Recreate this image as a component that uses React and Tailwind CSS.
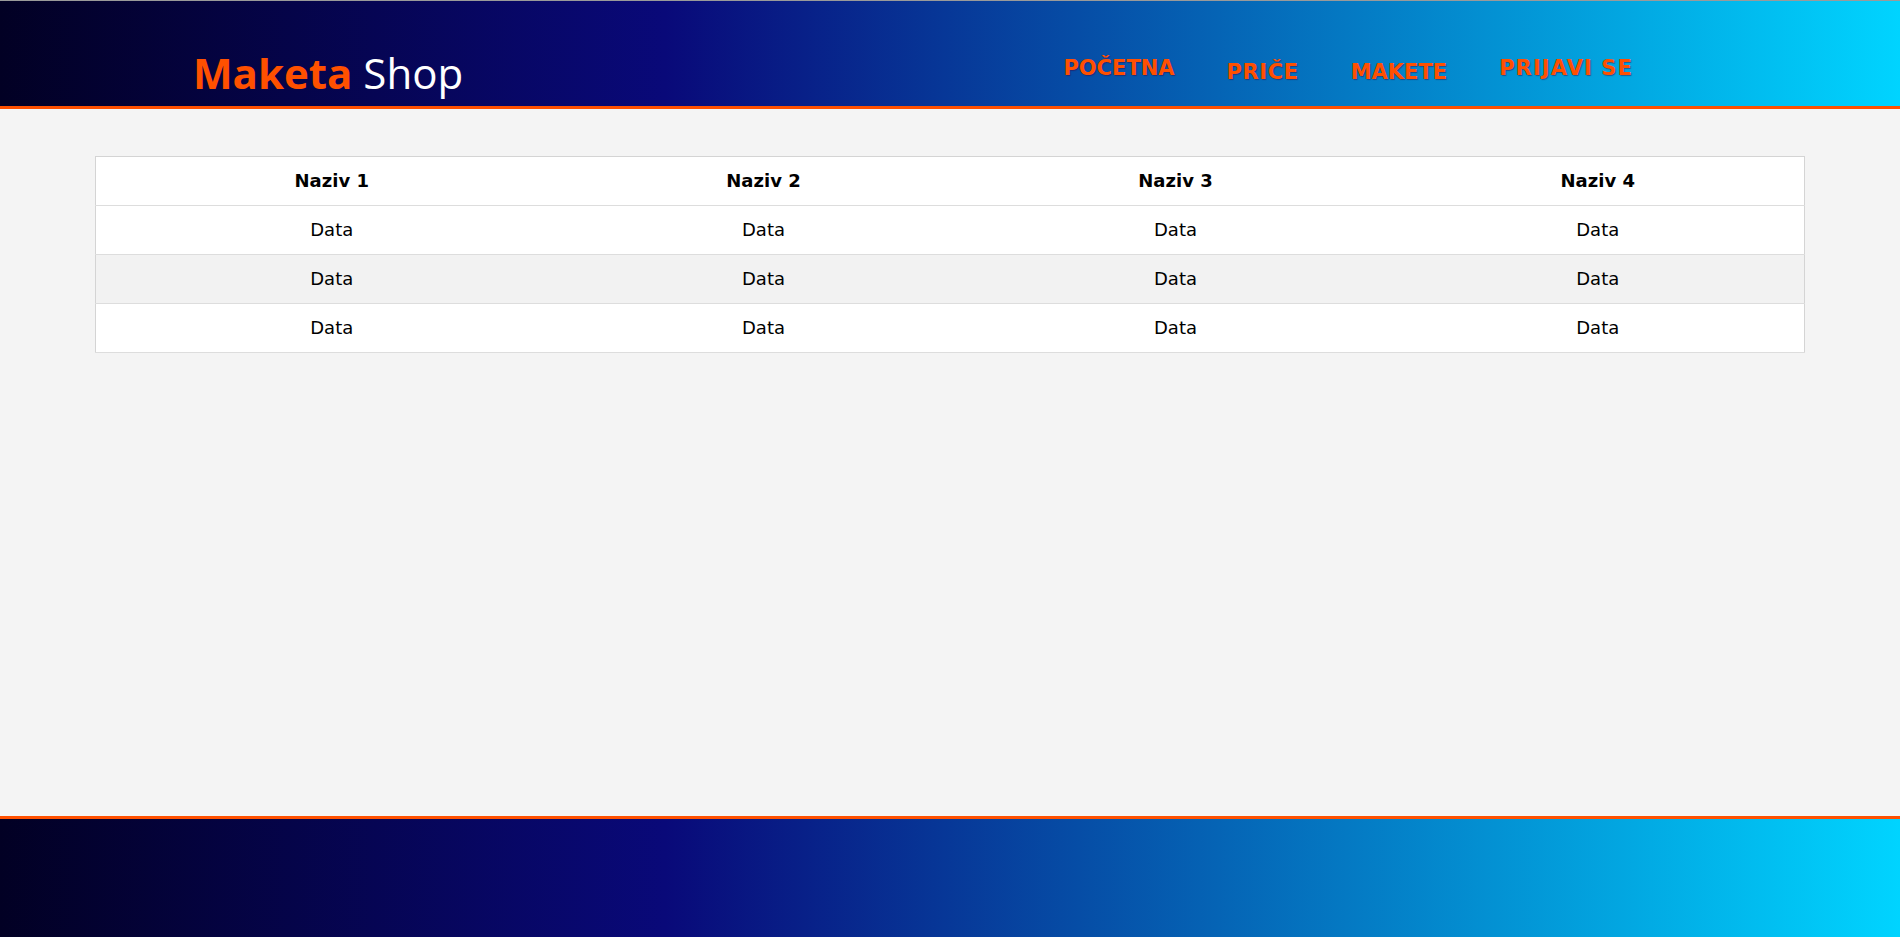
import React from 'react';

const navItems = [
  { label: 'POČETNA', offset: 'mt-[55px]', spacing: '' },
  { label: 'PRIČE', offset: 'mt-[59px]', spacing: 'tracking-[0.6px]' },
  { label: 'MAKETE', offset: 'mt-[59px]', spacing: '' },
  { label: 'PRIJAVI SE', offset: 'mt-[55px]', spacing: 'tracking-[1.1px]' },
];

const rows = [
  { bg: 'bg-white' },
  { bg: 'bg-[#f2f2f2]' },
  { bg: 'bg-white' },
];

const Header = () => (
  <header className="border-t border-[#9a9a9a] border-b-[3px] border-b-[#ff5000]">
    <div className="h-[105px] bg-[linear-gradient(90deg,#020024_0%,#090979_35%,#00d4ff_100%)] flex justify-between items-start pl-[193px] pr-[267px]">
      <div className="mt-[44px] text-[42px] leading-[56px] font-['Open_Sans',sans-serif] whitespace-nowrap">
        <span className="font-bold text-[#ff5000]">Maketa</span>{' '}
        <span className="text-white">Shop</span>
      </div>

      <nav className="flex items-start gap-[52px] font-['DejaVu_Sans',Verdana,sans-serif]">
        {navItems.map((item) => (
          <a
            key={item.label}
            href="#"
            className={`${item.offset} ${item.spacing} text-[21px] leading-[24px] font-bold text-[#ff5000] whitespace-nowrap [text-shadow:1px_1px_1px_rgba(60,0,60,0.45)]`}
          >
            {item.label}
          </a>
        ))}
      </nav>
    </div>
  </header>
);

const DataTable = () => (
  <div className="mt-[47px] mx-[95px]">
    <table className="w-full table-fixed border-collapse border border-[#d4d4d4] font-['DejaVu_Sans',Verdana,sans-serif] text-[18px] leading-[22px] text-black">
      <colgroup>
        <col className="w-[472px]" />
        <col className="w-[392px]" />
        <col className="w-[432px]" />
        <col />
      </colgroup>
      <thead>
        <tr className="bg-white border-b border-[#dddddd]">
          {[1, 2, 3, 4].map((n) => (
            <th key={n} className="py-[13px] font-bold text-center">
              Naziv {n}
            </th>
          ))}
        </tr>
      </thead>
      <tbody>
        {rows.map((row, i) => (
          <tr key={i} className={`${row.bg} border-b border-[#dddddd]`}>
            {[1, 2, 3, 4].map((n) => (
              <td key={n} className="py-[13px] text-center">
                Data
              </td>
            ))}
          </tr>
        ))}
      </tbody>
    </table>
  </div>
);

const Footer = () => (
  <footer className="border-t-[3px] border-[#ff5000]">
    <div className="h-[118px] bg-[linear-gradient(90deg,#020024_0%,#090979_35%,#00d4ff_100%)]"></div>
  </footer>
);

export default function App() {
  return (
    <div className="min-h-screen flex flex-col bg-[#f4f4f4]">
      <Header />
      <main className="flex-1">
        <DataTable />
      </main>
      <Footer />
    </div>
  );
}
